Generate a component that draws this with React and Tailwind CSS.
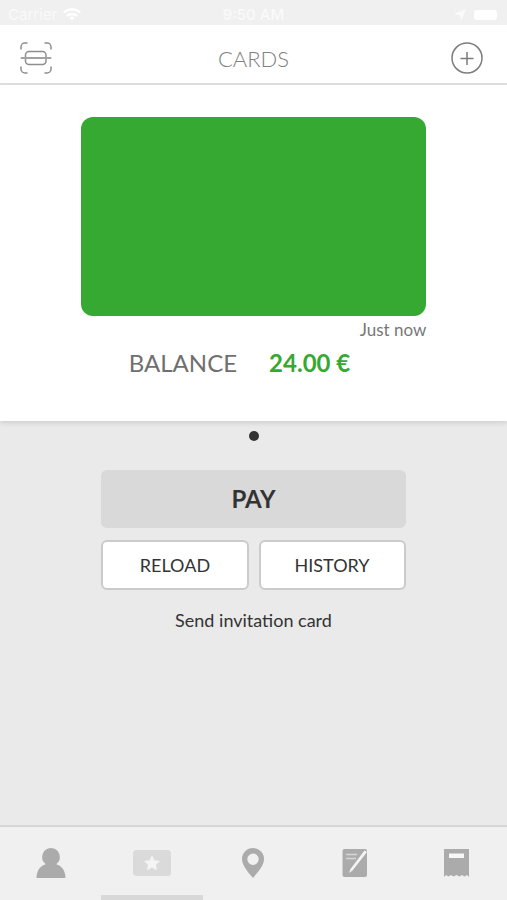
function ScanIcon() {
  return (
    <svg width="32" height="32" viewBox="0 0 32 32" fill="none" stroke="#8e8e8e" strokeWidth="1.5" strokeLinecap="round" aria-hidden="true">
      <path d="M1 7V5a4 4 0 0 1 4-4h2M25 1h2a4 4 0 0 1 4 4v2M31 25v2a4 4 0 0 1-4 4h-2M7 31H5a4 4 0 0 1-4-4v-2" />
      <rect x="5.500" y="9.500" width="20.500" height="13" rx="3.500" />
      <path d="M1.500 16h29" stroke="#a2a2a2" strokeWidth="2" />
    </svg>
  );
}

function PlusIcon() {
  return (
    <svg width="32" height="32" viewBox="0 0 32 32" fill="none" stroke="#7c7c7c" strokeWidth="1.5" aria-hidden="true">
      <circle cx="16" cy="16" r="15" />
      <path d="M16 10v13M9.500 16.500h13" />
    </svg>
  );
}

function PersonIcon() {
  return (
    <svg width="30" height="30" viewBox="0 0 30 30" fill="#ababab" aria-hidden="true">
      <path d="M15 0a9 9 0 0 1 5.200 16.200C26 17.800 29.500 23 29.500 30H.5C.5 23 4 17.800 9.800 16.200A9 9 0 0 1 15 0Z" />
    </svg>
  );
}

function CardIcon() {
  return (
    <svg width="38" height="26" viewBox="0 0 38 26" aria-hidden="true">
      <rect width="38" height="26" rx="3.500" fill="#dadada" />
      <path d="m19 5 2.400 5.200 5.600.7-4.100 3.900 1.100 5.600-5-2.800-5 2.800 1.100-5.600-4.100-3.900 5.600-.7Z" fill="#f4f4f4" />
    </svg>
  );
}

function PinIcon() {
  return (
    <svg width="22" height="30" viewBox="0 0 22 30" fill="#ababab" fillRule="evenodd" aria-hidden="true">
      <path d="M11 0a11 11 0 0 1 11 11c0 7-7 14-11 19C7 25 0 18 0 11A11 11 0 0 1 11 0Zm0 5.500a5.700 5.700 0 1 0 0 11.400 5.700 5.700 0 0 0 0-11.400Z" />
    </svg>
  );
}

function NoteIcon() {
  return (
    <svg width="26" height="28" viewBox="0 0 26 28" aria-hidden="true">
      <rect x="0.500" width="24.500" height="28" rx="2" fill="#ababab" />
      <path d="M4 5.500h11M4 9.500h10" stroke="#d6d6d6" strokeWidth="1.600" />
      <path d="M22.500 1.500 25 3 10.500 21.500 7 24 8.500 20Z" fill="#f4f4f4" />
    </svg>
  );
}

function ReceiptIcon() {
  return (
    <svg width="25" height="28" viewBox="0 0 25 28" aria-hidden="true">
      <path d="M0 0h25v28l-2-2-2.500 1.500L18 26l-2.500 1.500L12.500 26l-3 1.500L7 26l-2.500 1.500L2 26l-2 2Z" fill="#ababab" />
      <rect x="5" y="4.500" width="15" height="4.500" fill="#f7f7f7" />
    </svg>
  );
}

const tabs = [
  { name: 'Profile', Icon: PersonIcon },
  { name: 'Cards', Icon: CardIcon, active: true },
  { name: 'Places', Icon: PinIcon },
  { name: 'Notes', Icon: NoteIcon },
  { name: 'Receipts', Icon: ReceiptIcon },
];

function StatusBar() {
  return (
    <div className="grid h-[25px] grid-cols-3 items-center bg-[#f0f0f0] px-2 pt-1 font-[Inter,sans-serif] text-[15px] leading-5 text-[#fafafa]">
      <div className="flex items-center gap-1.5">
        <span>Carrier</span>
        <svg width="18" height="13" viewBox="0 0 18 13" fill="none" stroke="#fff" strokeWidth="2.500" aria-hidden="true">
          <path d="M1 4.500a11.500 11.500 0 0 1 16 0M4 8a7 7 0 0 1 10 0" />
          <path d="m9 12.500-2.500-2.500a3.500 3.500 0 0 1 5 0Z" fill="#fff" stroke="none" />
        </svg>
      </div>
      <span className="text-center font-medium">9:50 AM</span>
      <div className="flex items-center justify-end gap-2 pr-0.5">
        <svg width="12" height="12" viewBox="0 0 12 12" fill="#fafafa" aria-hidden="true">
          <path d="M12 0 7 12 6 6 0 5Z" />
        </svg>
        <div className="h-[10px] w-[23px] rounded-[3px] bg-white" />
      </div>
    </div>
  );
}

export default function App() {
  return (
    <div className="flex min-h-screen flex-col bg-[#eaeaea] font-[Lato,sans-serif] text-[#333]">
      <StatusBar />

      <header className="grid h-[60px] grid-cols-[1fr_auto_1fr] items-center border-b-2 border-[#e0e0e0] bg-white pt-2 pr-6 pl-5">
        <button type="button" aria-label="Scan" className="justify-self-start">
          <ScanIcon />
        </button>
        <h1 className="pt-0.5 pl-1 text-[22px] leading-8 font-light text-[#808080]">CARDS</h1>
        <button type="button" aria-label="Add card" className="justify-self-end">
          <PlusIcon />
        </button>
      </header>

      <main className="flex flex-1 flex-col items-center">
        <section className="flex w-full flex-col items-center bg-white pt-8 pb-[43px] shadow-[0_2px_5px_rgba(0,0,0,0.12)]">
          <div className="w-[68.2%]">
            <div className="aspect-[346/199] w-full rounded-xl bg-[#35a931]" />
            <p className="mt-1 text-right text-[17px] leading-5 text-[#777]">Just now</p>
          </div>
          <div className="mt-2 mr-7 flex gap-8 text-2xl leading-[30px]">
            <span className="text-[#6f6f6f]">BALANCE</span>
            <span className="font-bold text-[#35a931]">24.00 €</span>
          </div>
        </section>

        <div className="mt-[10px] size-[10px] rounded-full bg-[#333]" />

        <div className="mt-[29px] flex w-3/5 flex-col gap-3">
          <button type="button" className="h-[58px] rounded-md bg-[#d9d9d9] text-2xl font-bold">
            PAY
          </button>
          <div className="grid grid-cols-2 gap-[10px]">
            <button type="button" className="h-[50px] rounded-md border-2 border-[#cbcbcb] bg-white text-lg">
              RELOAD
            </button>
            <button type="button" className="h-[50px] rounded-md border-2 border-[#cbcbcb] bg-white text-lg">
              HISTORY
            </button>
          </div>
        </div>

        <a href="#invite" className="mt-[18px] text-lg leading-6">
          Send invitation card
        </a>
      </main>

      <nav className="grid h-[75px] grid-cols-5 border-t-2 border-[#d6d6d6] bg-[#f0f0f0]">
        {tabs.map(({ name, Icon, active }) => (
          <button
            key={name}
            type="button"
            aria-label={name}
            className={`flex items-center justify-center border-b-[5px] pt-1 ${active ? 'border-[#d8d8d8]' : 'border-transparent'}`}
          >
            <Icon />
          </button>
        ))}
      </nav>
    </div>
  );
}
